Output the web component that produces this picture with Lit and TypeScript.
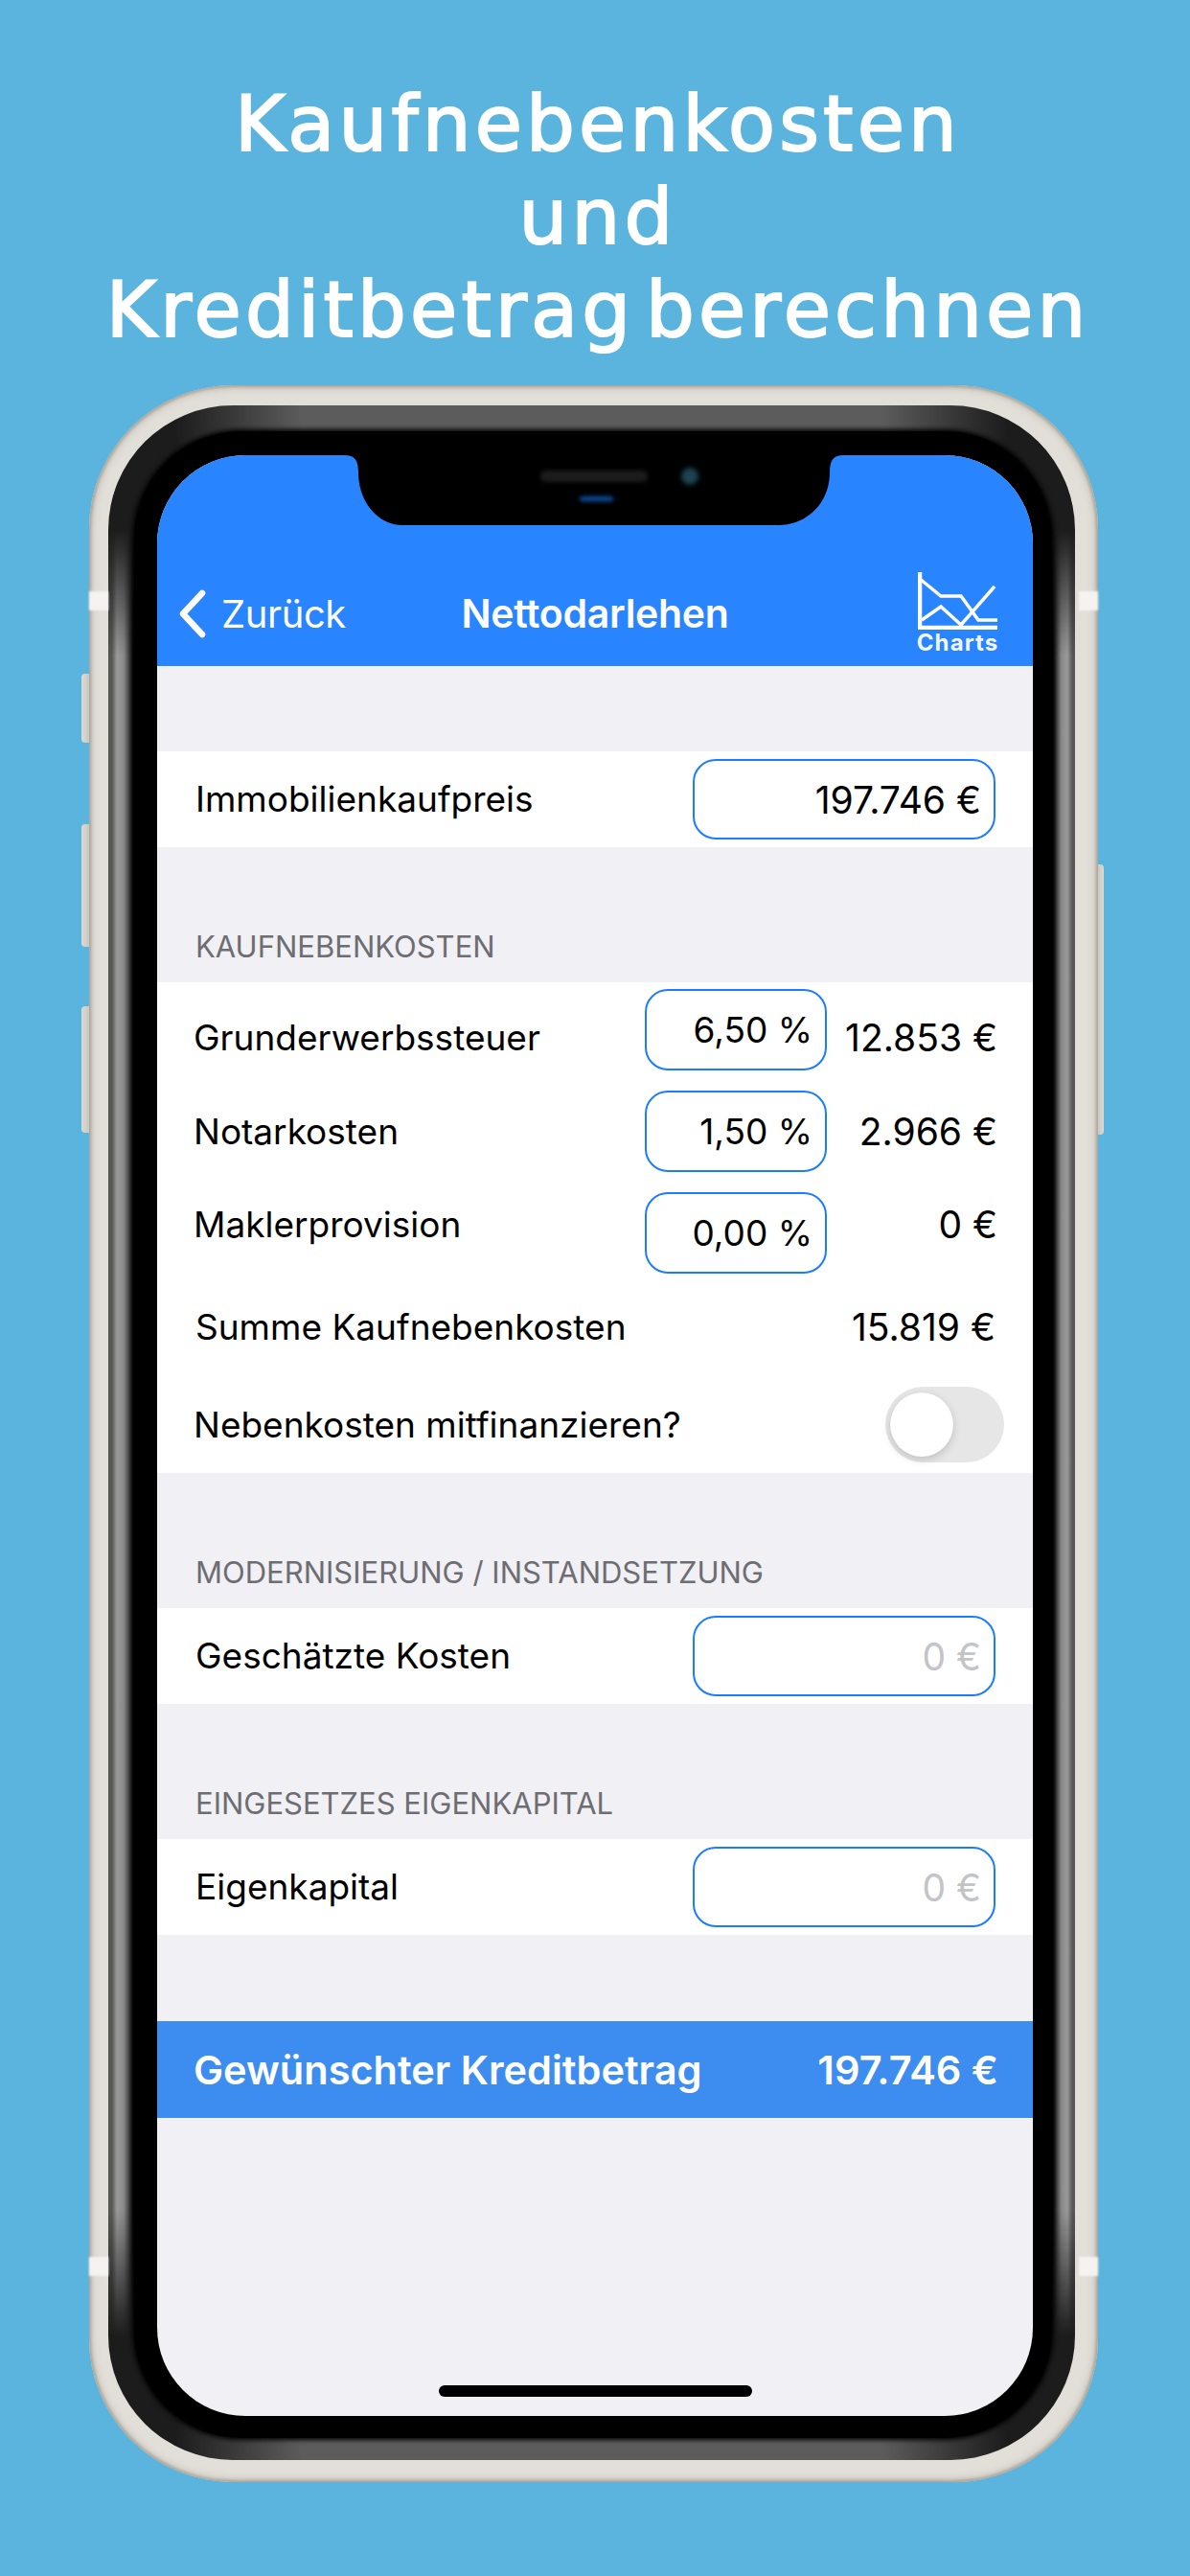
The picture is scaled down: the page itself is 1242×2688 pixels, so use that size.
import { LitElement, html, css } from "lit";
import { customElement } from "lit/decorators.js";

@customElement("app-root")
export class AppRoot extends LitElement {
  static styles = css`
    :host { display: block; width: 1242px; height: 2688px; background: #5ab4de; overflow: hidden; font-family: Inter, "Liberation Sans", sans-serif; }
    * { box-sizing: border-box; }
    h1 { margin: 0; padding: 81px 0 0 6px; height: 372px; font: 400 80px/97px "DejaVu Sans", sans-serif; color: #fff; text-align: center; letter-spacing: 4.2px; word-spacing: -18px; -webkit-text-stroke: 2px #fff; }
    .phone { position: relative; margin: 30px 0 0 93px; width: 1053px; height: 2188px; }
    .bezel { position: relative; height: 100%; border-radius: 150px; padding: 21px 24px 23px 20px; background: #e2dfd9; box-shadow: inset 0 0 3px 2px #aaa69b, inset 0 0 9px 3px #c4c0b7; }
    .dark { position: relative; height: 100%; border-radius: 130px; padding: 27px 24px 23px 27px; background: linear-gradient(to right, #1c1c1c 7%, #5c5c5c 20%, #5c5c5c 80%, #1c1c1c 93%); }
    .dark::before, .dark::after { content: ""; position: absolute; top: 6%; bottom: 6%; width: 27px; -webkit-mask-image: linear-gradient(to bottom, transparent, #000 7%, #000 93%, transparent); mask-image: linear-gradient(to bottom, transparent, #000 7%, #000 93%, transparent); }
    .dark::before { left: 0; background: linear-gradient(to right, #555 0, #585858 4px, #9a9a9a 9px, #8a8a8a 16px, #2a2a2a 24px, #000 27px); }
    .dark::after { right: 0; width: 24px; background: linear-gradient(to left, #555 0, #585858 3px, #9a9a9a 8px, #8a8a8a 14px, #2a2a2a 21px, #000 24px); }
    .black { position: relative; z-index: 1; height: 100%; background: #000; border-radius: 112px; padding: 25px 20px 23px 24px; box-shadow: 0 0 5px 2px #000; }
    .screen { position: relative; height: 100%; border-radius: 92px; overflow: hidden; background: #f0f0f5; display: flex; flex-direction: column; }
    .btn { position: absolute; background: linear-gradient(to right, #dcdad5, #c7c3ba); }
    .btn.l { left: -8px; width: 10px; border-radius: 4px 0 0 4px; }
    .btn.r { right: -6px; width: 8px; background: linear-gradient(to left, #dcdad5, #c7c3ba); border-radius: 0 4px 4px 0; }
    .band { position: absolute; z-index: 2; width: 20px; height: 20px; background: #f5f3ef; filter: blur(1px); }
    .notch { position: absolute; left: 196px; top: 0; width: 520px; height: 73px; }
    .speaker { position: absolute; left: 400px; top: 16px; width: 112px; height: 12px; border-radius: 6px; background: #1c1c1c; filter: blur(2px); }
    .cam { position: absolute; left: 547px; top: 13px; width: 18px; height: 18px; border-radius: 50%; background: #1d4450; filter: blur(2.5px); }
    .flake { position: absolute; left: 441px; top: 43px; width: 35px; height: 5px; border-radius: 3px; background: #0b4fa5; filter: blur(2px); }
    .nav { height: 220px; flex: none; background: #2884ff; color: #fff; padding: 110px 37px 0 37px; display: grid; grid-template-columns: 1fr auto 1fr; align-items: center; }
    .back { display: flex; align-items: center; gap: 15px; margin-left: -15px; font-size: 40px; letter-spacing: -0.4px; }
    .back svg { display: block; }
    .ttl { font-size: 41px; font-weight: 600; letter-spacing: -0.3px; }
    .charts { justify-self: end; width: 83px; display: flex; flex-direction: column; align-items: center; font-size: 24px; line-height: 27px; font-weight: 700; letter-spacing: 1.1px; color: #f2f7ff; white-space: nowrap; }
    .charts svg { display: block; }
    .gap { height: 89px; flex: none; }
    .hdr { height: 141px; flex: none; display: flex; align-items: flex-end; padding: 0 0 18px 40px; font-size: 31px; line-height: 38px; color: #6d6d72; }
    .one { height: 100px; flex: none; background: #fff; display: flex; align-items: center; justify-content: space-between; padding: 0 39px 0 40px; }
    .lbl { font-size: 37px; line-height: 44px; color: #000; }
    .box { border: 2.5px solid #1a7dff; border-radius: 24px; display: flex; align-items: center; justify-content: flex-end; padding-right: 13px; font-size: 39px; color: #000; background: #fff; }
    .box.w { width: 316px; height: 84px; }
    .box.n { width: 190px; height: 85px; font-size: 37px; }
    .ph { color: #c4c4c6; }
    .sec { height: 512px; flex: none; background: #fff; padding: 7px 37px 11px 38px; display: flex; flex-direction: column; }
    .pr { height: 85px; margin-bottom: 21px; display: grid; grid-template-columns: 1fr 190px 178px; align-items: center; }
    .pr:nth-child(3) { margin-bottom: 0; }
    .val { font-size: 39px; line-height: 44px; text-align: right; color: #000; }
    .down { margin-top: 17px; }
    .up { margin-bottom: 18px; }
    .sum { height: 119px; padding: 0 2px 7px 2px; display: flex; align-items: center; justify-content: space-between; }
    .tg { height: 79px; display: flex; align-items: center; justify-content: space-between; margin-right: -7px; }
    .toggle { position: relative; width: 124px; height: 79px; border-radius: 40px; background: #e6e6e6; }
    .thumb { position: absolute; left: 5px; top: 6px; width: 66px; height: 67px; border-radius: 50%; background: #fff; box-shadow: 0 3px 8px rgba(0,0,0,.16), 0 0 1px rgba(0,0,0,.1); }
    .fill { height: 90px; flex: none; }
    .bar { height: 101px; flex: none; background: #3d8cf0; color: #fff; display: flex; align-items: center; justify-content: space-between; padding: 0 36px 0 38px; font-size: 41.5px; font-weight: 600; }
    .rest { flex: 1; }
    .home { position: absolute; left: 294px; bottom: 20px; width: 327px; height: 12px; border-radius: 6px; background: #000; }
  `;

  private labelBox(label: string, value: string, ph = false) {
    return html`<div class="one"><span class="lbl">${label}</span><div class="box w ${ph ? "ph" : ""}">${value}</div></div>`;
  }

  private pctRow(label: string, pct: string, val: string, lblCls: string, valCls: string) {
    return html`<div class="pr">
      <span class="lbl ${lblCls}">${label}</span>
      <div class="box n">${pct}</div>
      <span class="val ${valCls}">${val}</span>
    </div>`;
  }

  render() {
    return html`
      <h1>Kaufnebenkosten<br />und<br />Kreditbetrag berechnen</h1>
      <div class="phone">
        <div class="btn l" style="top:301px;height:72px"></div>
        <div class="btn l" style="top:458px;height:128px"></div>
        <div class="btn l" style="top:648px;height:132px"></div>
        <div class="btn r" style="top:500px;height:282px"></div>
        <div class="band" style="left:0;top:215px"></div>
        <div class="band" style="right:0;top:215px"></div>
        <div class="band" style="left:0;top:1953px"></div>
        <div class="band" style="right:0;top:1953px"></div>
        <div class="bezel"><div class="dark"><div class="black">
          <div class="screen">
            <div class="nav">
              <div class="back">
                <svg width="30" height="53" viewBox="0 0 30 53"><polyline points="25,5 5,26.5 25,48" fill="none" stroke="#fff" stroke-width="6.5" stroke-linecap="round" stroke-linejoin="round"/></svg>
                <span>Zurück</span>
              </div>
              <div class="ttl">Nettodarlehen</div>
              <div class="charts">
                <svg width="83" height="60" viewBox="0 0 83 60" fill="none" stroke="#fff">
                  <polyline points="2,0 2,58 83,58" stroke-width="4.5"/>
                  <polyline points="2,7 24,25 45,25 63,50 83,50" stroke-width="3.5"/>
                  <polyline points="4,50 24,36 45,55 80,15" stroke-width="3.5"/>
                </svg>
                <span>Charts</span>
              </div>
            </div>
            <div class="gap"></div>
            ${this.labelBox("Immobilienkaufpreis", "197.746 €")}
            <div class="hdr">KAUFNEBENKOSTEN</div>
            <div class="sec">
              ${this.pctRow("Grunderwerbssteuer", "6,50 %", "12.853 €", "down", "down")}
              ${this.pctRow("Notarkosten", "1,50 %", "2.966 €", "", "")}
              ${this.pctRow("Maklerprovision", "0,00 %", "0 €", "up", "up")}
              <div class="sum"><span class="lbl">Summe Kaufnebenkosten</span><span class="val">15.819 €</span></div>
              <div class="tg"><span class="lbl">Nebenkosten mitfinanzieren?</span><div class="toggle"><div class="thumb"></div></div></div>
            </div>
            <div class="hdr">MODERNISIERUNG / INSTANDSETZUNG</div>
            ${this.labelBox("Geschätzte Kosten", "0 €", true)}
            <div class="hdr">EINGESETZES EIGENKAPITAL</div>
            ${this.labelBox("Eigenkapital", "0 €", true)}
            <div class="fill"></div>
            <div class="bar"><span>Gewünschter Kreditbetrag</span><span>197.746 €</span></div>
            <div class="rest"></div>
            <div class="home"></div>
            <svg class="notch" viewBox="0 0 520 73"><path d="M0 0 C10 0 14 5 14 18 C14 48 34 73 60 73 L452 73 C484 73 506 48 506 18 C506 5 510 0 520 0 Z" fill="#000"/></svg>
            <div class="speaker"></div><div class="cam"></div><div class="flake"></div>
          </div>
        </div></div></div>
      </div>
    `;
  }
}
